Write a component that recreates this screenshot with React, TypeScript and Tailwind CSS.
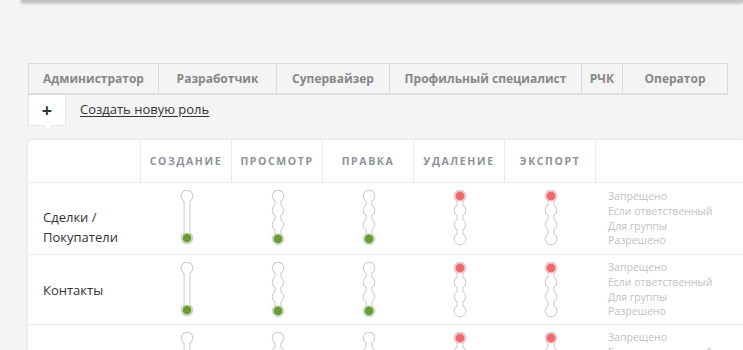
import React from "react";

type Tone = "green" | "red";

const tabs: { label: string; w: string }[] = [
  { label: "Администратор", w: "w-[130px]" },
  { label: "Разработчик", w: "w-[118px]" },
  { label: "Супервайзер", w: "w-[113px]" },
  { label: "Профильный специалист", w: "w-[192px]" },
  { label: "РЧК", w: "w-[41px]" },
  { label: "Оператор", w: "w-[105px]" },
];

const columns = ["Создание", "Просмотр", "Правка", "Удаление", "Экспорт"];

const levels = ["Запрещено", "Если ответственный", "Для группы", "Разрешено"];

// each slider: line = two-state rod, chain = four beads
const rows: {
  label: string;
  h: string;
  labelCls: string;
  cells: { kind: "line" | "chain"; active: number; tone: Tone }[];
}[] = [
  {
    label: "Сделки / Покупатели",
    h: "h-[72px]",
    labelCls: "pt-4",
    cells: [
      { kind: "line", active: 1, tone: "green" },
      { kind: "chain", active: 3, tone: "green" },
      { kind: "chain", active: 3, tone: "green" },
      { kind: "chain", active: 0, tone: "red" },
      { kind: "chain", active: 0, tone: "red" },
    ],
  },
  {
    label: "Контакты",
    h: "h-[70px]",
    labelCls: "",
    cells: [
      { kind: "line", active: 1, tone: "green" },
      { kind: "chain", active: 3, tone: "green" },
      { kind: "chain", active: 3, tone: "green" },
      { kind: "chain", active: 0, tone: "red" },
      { kind: "chain", active: 0, tone: "red" },
    ],
  },
  {
    label: "",
    h: "h-[70px]",
    labelCls: "",
    cells: [
      { kind: "line", active: 1, tone: "green" },
      { kind: "chain", active: 3, tone: "green" },
      { kind: "chain", active: 3, tone: "green" },
      { kind: "chain", active: 0, tone: "red" },
      { kind: "chain", active: 0, tone: "red" },
    ],
  },
];

const Slider: React.FC<{ kind: "line" | "chain"; active: number; tone: Tone }> = ({ kind, active, tone }) => {
  const ys = kind === "line" ? [6, 48] : [6, 20.3, 34.6, 48.9];
  const y0 = ys[0];
  const y1 = ys[ys.length - 1];
  const ay = ys[active];
  const halo = tone === "green" ? "#c9dfb4" : "#f7c3c3";
  const fill = tone === "green" ? "#6c9a38" : "#ee6a6c";
  return (
    <svg width="16" height="56" viewBox="0 0 16 56">
      <g stroke="#cbcbcb" strokeWidth="2" fill="none">
        {ys.map((y) => (
          <circle key={y} cx="8" cy={y} r="5.3" />
        ))}
        <rect x="5.6" y={y0} width="4.8" height={y1 - y0} />
      </g>
      <g fill="#fff">
        {ys.map((y) => (
          <circle key={y} cx="8" cy={y} r="5.3" />
        ))}
        <rect x="5.6" y={y0} width="4.8" height={y1 - y0} />
      </g>
      <circle cx="8" cy={ay} r="5.6" fill={halo} />
      <circle cx="8" cy={ay} r="4.3" fill={fill} />
    </svg>
  );
};

export default function App() {
  return (
    <div
      className="h-[350px] w-[743px] overflow-hidden bg-[#f4f4f4] text-[#333]"
      style={{ fontFamily: "'Open Sans', 'Noto Sans', sans-serif" }}
    >
      {/* bottom edge of the panel above */}
      <div className="ml-[21px] h-[2px] bg-[#c4c4c4] shadow-[0_1px_3px_rgba(0,0,0,0.35)]" />

      <div className="pl-[28px]">
        {/* role tabs */}
        <div className="mt-[61px] flex border-t border-b-2 border-l border-[#dcdcdc] w-max">
          {tabs.map((t) => (
            <div
              key={t.label}
              className={`${t.w} h-[29px] flex items-center justify-center border-r border-[#dcdcdc] text-[12px] font-bold text-[#888]`}
            >
              {t.label}
            </div>
          ))}
        </div>

        <div className="flex items-start">
          <div className="relative w-[38px] h-[31px] bg-white border border-t-0 border-[#e6e6e6] flex items-center justify-center text-[18px] font-bold text-[#333] leading-none">
            +
            <span className="absolute left-[14px] -bottom-[6px] w-0 h-0 border-l-[5px] border-r-[5px] border-t-[6px] border-l-transparent border-r-transparent border-t-[#e6e6e6]" />
            <span className="absolute left-[15px] -bottom-[5px] w-0 h-0 border-l-[4px] border-r-[4px] border-t-[5px] border-l-transparent border-r-transparent border-t-white" />
          </div>
          <a className="ml-[14px] mt-[5px] text-[13px] underline underline-offset-2 text-[#333]">Создать новую роль</a>
        </div>

        {/* permissions card */}
        <div className="mt-[14px] bg-white rounded-tl-[4px] shadow-[0_0_3px_rgba(0,0,0,0.12)]">
          <div className="flex h-[43px] border-b border-[#ececec]">
            <div className="w-[113px] border-r border-[#ececec]" />
            {columns.map((c) => (
              <div
                key={c}
                className="w-[91px] border-r border-[#ececec] flex items-center justify-center pt-[2px] text-[10.5px] font-bold uppercase tracking-[1.6px] text-[#8d929b]"
              >
                {c}
              </div>
            ))}
            <div className="flex-1" />
          </div>

          {rows.map((r, i) => (
            <div key={i} className={`flex ${r.h} border-b border-[#ececec]`}>
              <div className={`w-[113px] pl-[15px] flex items-center text-[13px] leading-[20px] text-[#333] ${r.labelCls}`}>
                <span className="w-[80px]">{r.label}</span>
              </div>
              {r.cells.map((c, j) => (
                <div key={j} className="w-[91px] flex justify-center pt-[7px]">
                  <Slider kind={c.kind} active={c.active} tone={c.tone} />
                </div>
              ))}
              <div className="flex-1 pl-[12px] flex flex-col justify-center text-[10.5px] leading-[14.7px] text-[#c2c2c2]">
                {levels.map((l) => (
                  <div key={l}>{l}</div>
                ))}
              </div>
            </div>
          ))}
        </div>
      </div>
    </div>
  );
}
